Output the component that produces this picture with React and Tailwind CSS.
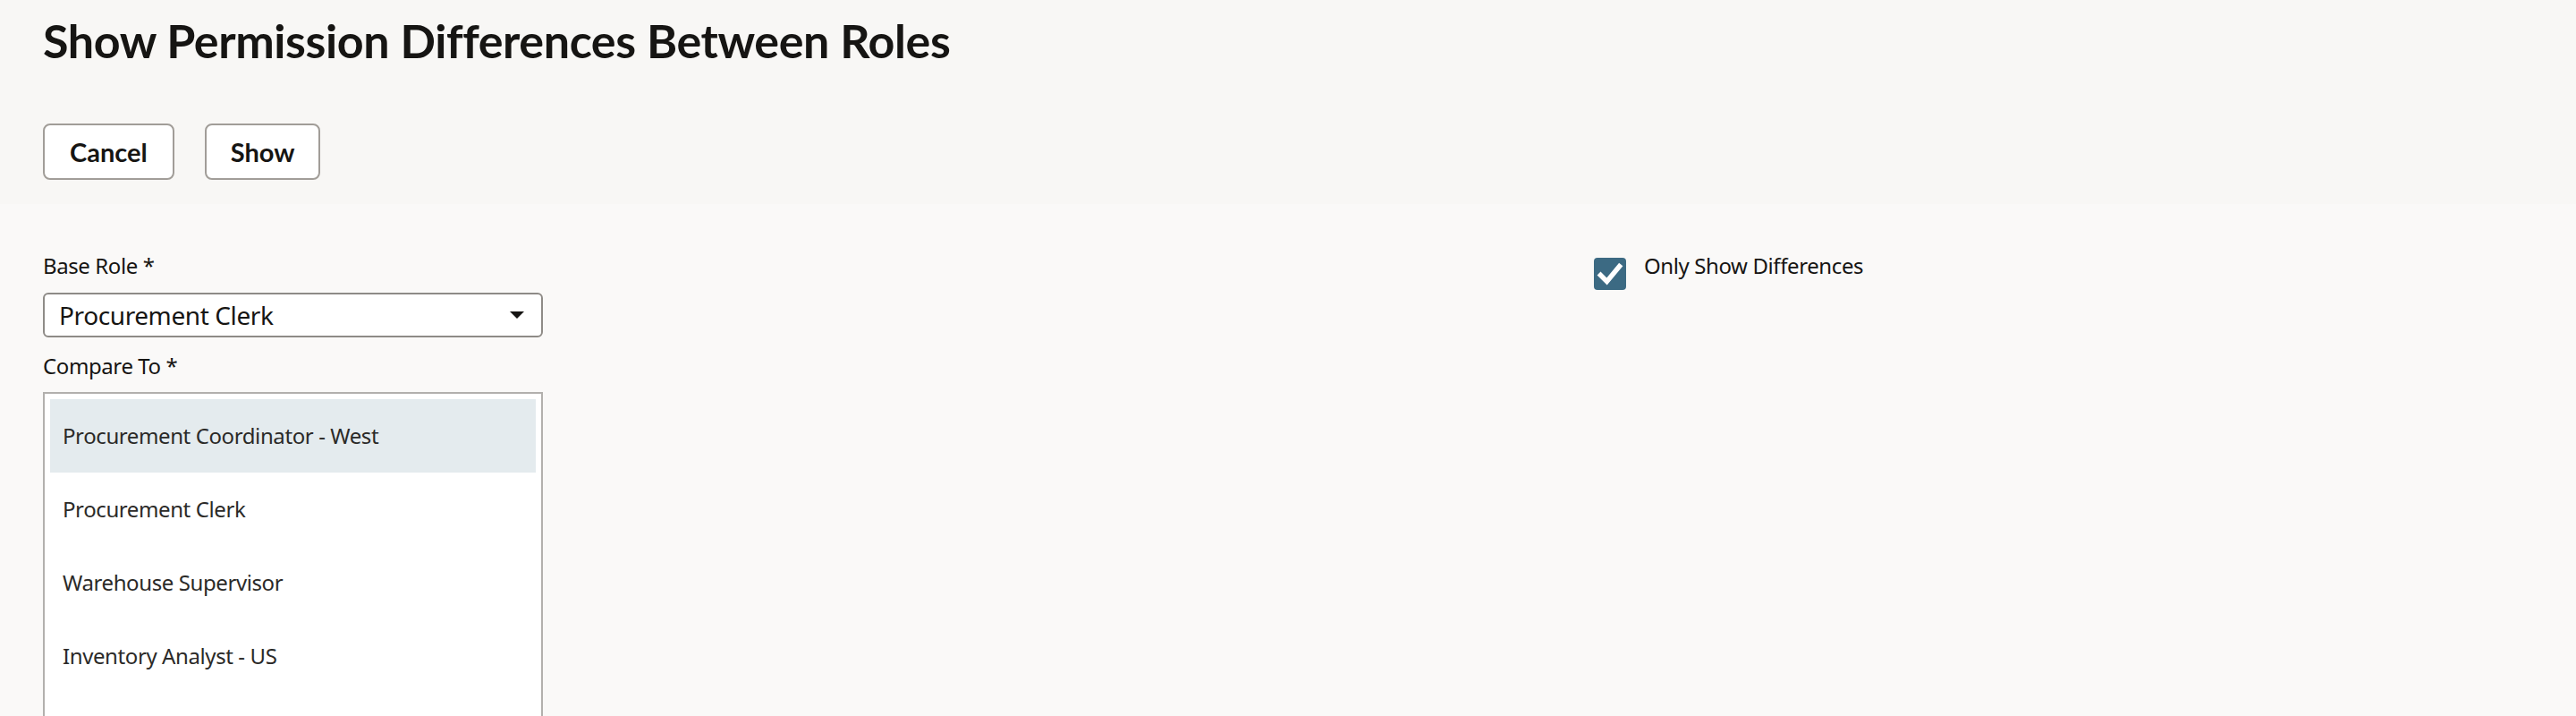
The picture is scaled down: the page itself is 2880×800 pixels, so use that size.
export default function App() {
  const items = [
    "Procurement Coordinator - West",
    "Procurement Clerk",
    "Warehouse Supervisor",
    "Inventory Analyst - US",
  ];
  return (
    <div className="min-h-screen bg-[#faf9f8] text-[#161513] font-['Noto_Sans',sans-serif] tracking-[-0.025em]">
      <div className="bg-[#f8f7f5] px-[48px] pt-[13px] pb-[27px]">
        <h1 className="text-[52px] leading-[64px] font-bold font-['Lato',sans-serif] tracking-[-0.4px]">Show Permission Differences Between Roles</h1>
        <div className="mt-[61px] flex gap-[34px]">
          <button className="h-[63px] px-[28px] rounded-[8px] border-2 border-[#a19d98] bg-white text-[29px] font-bold font-['Lato',sans-serif] tracking-normal">Cancel</button>
          <button className="h-[63px] px-[27px] rounded-[8px] border-2 border-[#a19d98] bg-white text-[29px] font-bold font-['Lato',sans-serif] tracking-normal">Show</button>
        </div>
      </div>
      <div className="flex px-[48px] pt-[53px]">
        <div className="w-[559px] flex flex-col">
          <label className="text-[24px] leading-[32px]">Base Role *</label>
          <div className="mt-[14px] h-[50px] rounded-[6px] border-2 border-[#8e8b87] bg-white flex items-center justify-between pl-[16px] pr-[19px]">
            <span className="text-[28px] leading-[36px]">Procurement Clerk</span>
            <svg width="16" height="8" viewBox="0 0 16 8"><path d="M0 0 H16 L8 8 Z" fill="#161513" /></svg>
          </div>
          <label className="mt-[16px] text-[24px] leading-[32px]">Compare To *</label>
          <div className="mt-[13px] h-[420px] border-2 border-[#b2b0ad] bg-white p-[6px] flex flex-col">
            {items.map((it, i) => (
              <div
                key={it}
                className={i === 0 ? "h-[82px] shrink-0 flex items-center px-[14px] bg-[#e4ebee] text-[24px] text-[#2b2a28]" : "h-[82px] shrink-0 flex items-center px-[14px] text-[24px] text-[#2b2a28]"}
              >
                {it}
              </div>
            ))}
          </div>
        </div>
        <div className="ml-[1175px] flex items-start gap-[20px]">
          <div className="mt-[7px] w-[36px] h-[36px] rounded-[4px] bg-[#3c6a83] flex items-center justify-center">
            <svg width="36" height="36" viewBox="0 0 36 36">
              <path d="M7.5 19.5 L14.5 26.5 L28.5 9.5" fill="none" stroke="white" strokeWidth="5.5" strokeLinecap="square" />
            </svg>
          </div>
          <span className="text-[24px] leading-[32px]">Only Show Differences</span>
        </div>
      </div>
    </div>
  );
}
